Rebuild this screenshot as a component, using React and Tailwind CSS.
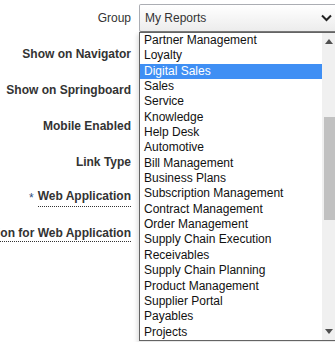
import React from 'react';

const groups = [
  'Partner Management',
  'Loyalty',
  'Digital Sales',
  'Sales',
  'Service',
  'Knowledge',
  'Help Desk',
  'Automotive',
  'Bill Management',
  'Business Plans',
  'Subscription Management',
  'Contract Management',
  'Order Management',
  'Supply Chain Execution',
  'Receivables',
  'Supply Chain Planning',
  'Product Management',
  'Supplier Portal',
  'Payables',
  'Projects',
];

const FieldLabel = ({ children, bold = true, underline = false, required = false }) => (
  <div className="w-[131px] shrink-0 flex justify-end whitespace-nowrap">
    {required && <span className="mr-[4px] text-[#2f4f7f]">*</span>}
    <span
      className={`leading-[14px] text-[#333] ${bold ? 'font-bold' : 'font-normal'} ${
        underline ? 'border-b border-dotted border-[#333] pb-[1px]' : ''
      }`}
    >
      {children}
    </span>
  </div>
);

const App = () => {
  const selected = 'Digital Sales';

  return (
    <div className="relative w-[335px] h-[342px] overflow-hidden bg-white font-['Liberation_Sans',Arial,sans-serif] text-[12px]">
      <div className="flex flex-col">
        <div className="h-[36px] flex items-center">
          <FieldLabel bold={false}>Group</FieldLabel>
          <div className="ml-[8px] w-[204px] h-[28px] shrink-0 flex items-center pl-[5px] pr-[9px] border border-[#abadb3] border-b-[#7a7a7a] rounded-[2px] bg-gradient-to-b from-white to-[#ececec] text-[#333]">
            <span className="flex-1">My Reports</span>
            <svg width="11" height="8" viewBox="0 0 11 8" className="mr-[1px]">
              <path d="M1 1.5 L5.5 6 L10 1.5" fill="none" stroke="#222" strokeWidth="2" />
            </svg>
          </div>
        </div>
        <div className="h-[36px] flex items-center">
          <FieldLabel>Show on Navigator</FieldLabel>
        </div>
        <div className="h-[36px] flex items-center">
          <FieldLabel>Show on Springboard</FieldLabel>
        </div>
        <div className="h-[36px] flex items-center">
          <FieldLabel>Mobile Enabled</FieldLabel>
        </div>
        <div className="h-[36px] flex items-center">
          <FieldLabel>Link Type</FieldLabel>
        </div>
        <div className="h-[36px] flex items-center">
          <FieldLabel underline required>
            Web Application
          </FieldLabel>
        </div>
        <div className="h-[36px] flex items-center">
          <FieldLabel underline>Description for Web Application</FieldLabel>
        </div>
      </div>

      {/* Open dropdown list */}
      <div className="absolute left-[139px] top-[32px] w-[200px] h-[309px] flex border border-[#646464] bg-white shadow-[-2px_2px_4px_rgba(0,0,0,0.12)]">
        <ul className="flex-1 flex flex-col">
          {groups.map((g) => (
            <li
              key={g}
              className={`h-[15.35px] leading-[15.35px] pl-[4px] whitespace-nowrap ${
                g === selected ? 'bg-[#3f8ff4] text-white' : 'text-[#111]'
              }`}
            >
              {g}
            </li>
          ))}
        </ul>
        <div className="w-[16px] flex flex-col bg-[#f0f0f0]">
          <div className="h-[17px] flex items-center justify-center pr-[2px]">
            <svg width="8" height="5" viewBox="0 0 8 5">
              <path d="M0 5 L4 0 L8 5 Z" fill="#505050" />
            </svg>
          </div>
          <div className="flex-1 pt-[67px] pl-[2px] pr-[3px]">
            <div className="h-[103px] bg-[#c1c1c1]" />
          </div>
          <div className="h-[17px] flex items-center justify-center pr-[2px]">
            <svg width="8" height="5" viewBox="0 0 8 5">
              <path d="M0 0 L8 0 L4 5 Z" fill="#505050" />
            </svg>
          </div>
        </div>
      </div>
    </div>
  );
};

export default App;
